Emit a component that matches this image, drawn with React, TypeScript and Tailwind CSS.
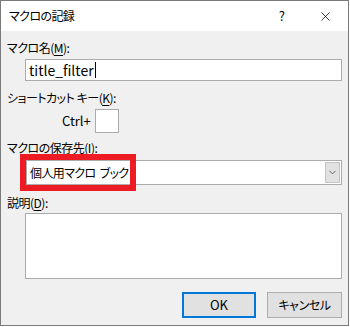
import { X, ChevronDown } from "lucide-react";

const font = { fontFamily: '"Noto Sans CJK JP", "Noto Sans", sans-serif' };

function Label({ text, mnemonic }: { text: string; mnemonic: string }) {
  return (
    <div className="h-4 text-[12px] leading-4 tracking-[-0.5px] text-black">
      {text}(<span className="underline underline-offset-2">{mnemonic}</span>):
    </div>
  );
}

export default function App() {
  return (
    <div
      className="h-[327px] w-[350px] overflow-hidden bg-white [font-feature-settings:'palt']"
      style={font}
    >
      <div className="flex h-[326px] w-[349px] flex-col border border-[#7a7a7a]">
        {/* title bar */}
        <div className="flex h-[30px] shrink-0 items-center bg-white pl-2">
          <span className="text-[12px] tracking-[-0.6px] text-black">マクロの記録</span>
          <span className="ml-auto mr-[33px] text-[13px] text-black">?</span>
          <X className="mr-[15px] h-[15px] w-[15px] text-black" strokeWidth={1.2} />
        </div>

        {/* body */}
        <div className="flex flex-1 flex-col bg-[#f0f0f0] pl-[6px] pr-[6px]">
          <div className="mt-[9px]">
            <Label text="マクロ名" mnemonic="M" />
          </div>
          <div className="ml-[18px] mt-[3px] flex h-[22px] items-center border border-[#ababab] bg-white pl-[3px] text-[14px] text-black">
            title_filter
            <span className="ml-px inline-block h-[16px] w-px bg-black" />
          </div>

          <div className="mt-[9px]">
            <Label text="ショートカット キー" mnemonic="K" />
          </div>
          <div className="mt-[3px] flex items-center">
            <span className="ml-[55px] text-[13px] text-black">Ctrl+</span>
            <div className="ml-[4px] h-[24px] w-[24px] border border-[#ababab] bg-white" />
          </div>

          <div className="mt-[7px]">
            <Label text="マクロの保存先" mnemonic="I" />
          </div>
          <div className="relative ml-[19px] mt-[4px] flex h-[25px] border border-[#ababab] bg-white">
            <span className="flex flex-1 items-center pl-[3px] text-[12px] tracking-[-0.6px] text-black">
              個人用マクロ<span className="ml-[4px]">ブック</span>
            </span>
            <div className="m-px flex w-[15px] items-center justify-center border border-[#c4c4c4] bg-[#e1e1e1]">
              <ChevronDown className="h-[11px] w-[11px] text-[#333]" strokeWidth={1.5} />
            </div>
            <div className="absolute -left-[7px] -top-[7px] h-[37px] w-[116px] border-[6px] border-[#ed1c24]" />
          </div>

          <div className="mt-[10px]">
            <Label text="説明" mnemonic="D" />
          </div>
          <div className="ml-[18px] mt-[2px] h-[66px] border border-[#ababab] bg-white" />

          <div className="mt-[13px] flex justify-end gap-[11px]">
            <button
              type="button"
              className="h-[26px] w-[74px] border-2 border-[#0078d7] bg-[#e1e1e1] text-[13px] text-black"
            >
              OK
            </button>
            <button
              type="button"
              className="h-[26px] w-[75px] border border-[#adadad] bg-[#e1e1e1] text-[12px] tracking-[-0.4px] text-black"
            >
              キャンセル
            </button>
          </div>
        </div>
      </div>
    </div>
  );
}
